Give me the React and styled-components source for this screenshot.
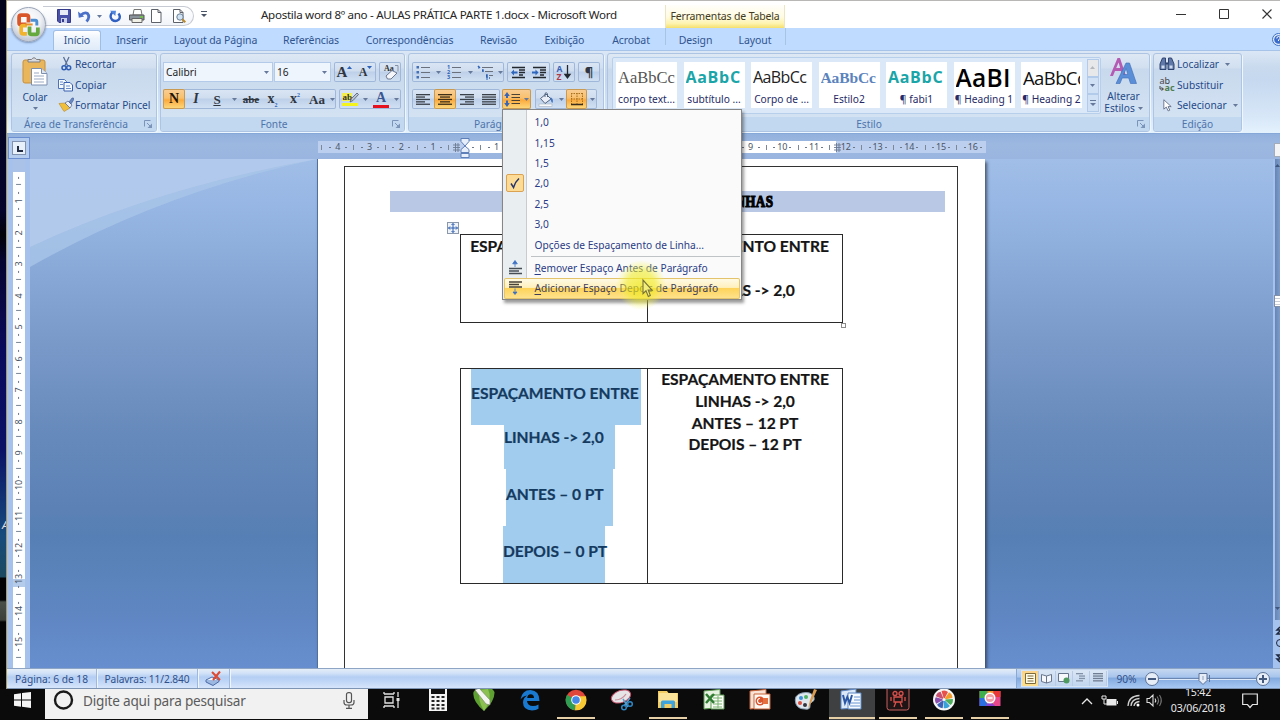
import React from 'react';
import styled, { createGlobalStyle, css } from 'styled-components';

const GlobalStyle = createGlobalStyle`
    * {
        box-sizing: border-box;
    }

    body {
        margin: 0;
        overflow: hidden;
        background: #000;
        font-family: 'Noto Sans', 'Open Sans', sans-serif;
        font-size: 10.2px;
        color: #264a88;
    }

    svg {
        display: block;
        flex: none;
        overflow: visible;
    }
`;

const Screen = styled.div`
    width: 1280px;
    height: 720px;
    display: flex;
    flex-direction: column;
    overflow: hidden;
    position: relative;
`;

const Desktop = styled.div`
    height: 689px;
    display: flex;
`;

const Wallpaper = styled.div`
    width: 7px;
    padding: 517px 0 0 2px;
    overflow: hidden;
    font-size: 11px;
    font-style: italic;
    color: #ddd;
    border-right: 1px solid #a89a60;
    background: linear-gradient(#03031a 0, #04042c 210px, #020208 235px, #050530 260px, #0a0a5c 350px,
        #0b1266 450px, #174b7c 535px, #1c4a60 577px, #020205 578px, #020205 600px, #4a5048 602px, #3c4038 620px,
        #050505 622px);
`;

const Window = styled.div`
    width: 1273px;
    display: flex;
    flex-direction: column;
    background: #bfdbff;
`;

/* ---------- title bar ---------- */

const TitleBar = styled.div`
    height: 28px;
    display: flex;
    background: #fff;
    border-top: 1px solid #b9b7b5;
`;

const QuickAccess = styled.div`
    width: 151px;
    height: 20px;
    flex: none;
    margin: 5px 0 0 36px;
    padding-left: 12px;
    display: flex;
    align-items: center;
    border: 1px solid #c6cad2;
    border-left: none;
    border-radius: 0 10px 10px 0;
    background: linear-gradient(#fff, #f1f4f9);
`;

const Slot = styled.span`
    width: ${(props) => props.$w}px;
    height: 100%;
    flex: none;
    display: flex;
    align-items: center;
    justify-content: center;
`;

const Title = styled.div`
    width: 404px;
    flex: none;
    margin-left: 47px;
    line-height: 27px;
    font-size: 11.6px;
    letter-spacing: -0.3px;
    color: #262626;
    white-space: nowrap;
`;

const ContextTitle = styled.div`
    width: 120px;
    height: 23px;
    flex: none;
    margin-top: 4px;
    line-height: 23px;
    text-align: center;
    font-size: 10.5px;
    letter-spacing: -0.15px;
    white-space: nowrap;
    color: #3f3a24;
    border-left: 1px solid #ece4c4;
    border-right: 1px solid #ece4c4;
    background: linear-gradient(#fffefa 0, #fffbe2 50%, #fdf3b0 80%, #f5e06c 100%);
`;

const WindowButtons = styled.div`
    margin-left: auto;
    height: 26px;
    display: flex;
    align-items: center;
`;

const OfficeButton = styled.div`
    position: absolute;
    left: 11px;
    top: 7px;
    width: 35px;
    height: 35px;
    display: flex;
    align-items: center;
    justify-content: center;
    border-radius: 50%;
    border: 1px solid #98a3b5;
    background: radial-gradient(circle at 50% 35%, #fff 0, #eef0f4 45%, #c3cad6 75%, #f2f6fb 100%);
    box-shadow: 0 1px 2px rgba(60, 80, 120, 0.5);
`;

/* ---------- tabs ---------- */

const TabStrip = styled.div`
    height: 22px;
    padding: 2px 0 0 46px;
    display: flex;
    background: #bfdbff;
`;

const Tab = styled.div`
    width: ${(props) => props.$w}px;
    height: 20px;
    line-height: 20px;
    text-align: center;
    font-size: 10.5px;
    letter-spacing: -0.1px;
    white-space: nowrap;
    color: #31558f;
    ${(props) => props.$active && css`
        border: 1px solid #9fbde6;
        border-bottom: none;
        border-radius: 3px 3px 0 0;
        line-height: 19px;
        background: linear-gradient(#fff, #edf4fc 40%, #e0ebf9);
    `}
`;

const ContextTabs = styled.div`
    display: flex;
    margin-top: -2px;
    padding-top: 2px;
    height: 17px;
    border-left: 1px solid #a9c3e3;
    border-right: 1px solid #a9c3e3;
`;

const Help = styled.div`
    margin: 0 0 0 auto;
    width: 8px;
    overflow: hidden;
    padding-top: 3px;
`;

/* ---------- ribbon ---------- */

const Ribbon = styled.div`
    height: 84px;
    padding: 2px 0 0 4px;
    display: flex;
    gap: 3px;
    border-top: 1px solid #a7c4e8;
    border-bottom: 1px solid #86a8d8;
    background: linear-gradient(#dbe7f5 0, #c9daee 20%, #c5d8ef 35%, #d8e7f8 80%, #e4f2fd 100%);
`;

const Group = styled.div`
    width: ${(props) => props.$w}px;
    height: 79px;
    flex: none;
    display: flex;
    flex-direction: column;
    border: 1px solid #adc4e2;
    border-radius: 3px;
    box-shadow: 1px 1px 0 #eef6ff;
    background: linear-gradient(#dee8f5 0, #d1dfef 14px, #c8d9ed 15px, #d7e5f5 100%);
    overflow: hidden;
`;

const GroupBody = styled.div`
    height: 63px;
    display: flex;
`;

const GroupLabel = styled.div`
    height: 14px;
    display: flex;
    align-items: center;
    justify-content: center;
    color: #4f74ab;
    background: #c1d8f0;

    svg {
        margin: 0 3px 0 auto;
    }

    span {
        flex: 1;
        text-align: center;
        white-space: nowrap;
        padding-right: ${(props) => props.$pr || 0}px;
    }
`;

const ToolRows = styled.div`
    padding: 8px 0 0 ${(props) => props.$pl}px;
    display: flex;
    flex-direction: column;
    gap: 7px;
`;

const ToolRow = styled.div`
    height: 20px;
    display: flex;
    gap: 3px;
`;

const Combo = styled.div`
    width: ${(props) => props.$w}px;
    margin-right: ${(props) => props.$mr || 0}px;
    height: 20px;
    padding: 0 3px 0 2px;
    display: flex;
    align-items: center;
    justify-content: space-between;
    color: #222;
    border: 1px solid #b3cae8;
    background: #eef5fd;
`;

const ButtonSet = styled.div`
    height: 20px;
    display: flex;
    border-radius: 2px;
    margin-left: ${(props) => props.$ml || 0}px;
    box-shadow: inset 0 0 0 1px #9fb7d8;
    background: linear-gradient(#dbe6f4 0, #cfddef 45%, #bdd0e9 50%, #d3e2f4 100%);
`;

const ToolButton = styled.div`
    width: ${(props) => props.$w}px;
    height: 20px;
    flex: none;
    display: flex;
    align-items: center;
    justify-content: center;
    gap: 3px;
    ${(props) => props.$on && css`
        border-radius: 2px;
        box-shadow: inset 0 0 0 1px #c99b52;
        background: linear-gradient(#f8cf98 0, #f9bf6c 45%, #fbaa3e 55%, #fddc80 100%);
    `}
    ${(props) => props.$top && css`
        gap: 0;

        svg {
            align-self: flex-start;
            margin-top: 4px;
        }
    `}
`;

const Glyph = styled.span`
    font-family: ${(props) => (props.$sans ? "'Noto Sans', sans-serif" : "'Liberation Serif', serif")};
    font-size: ${(props) => props.$size || 14}px;
    font-weight: 700;
    font-style: ${(props) => (props.$italic ? 'italic' : 'normal')};
    text-decoration: ${(props) => props.$deco || 'none'};
    line-height: 1;
    color: ${(props) => props.$color || '#2f3640'};

    sub,
    sup {
        font-size: 6px;
        line-height: 0;
        color: #2c62b8;
    }
`;

const Underbar = styled.div`
    display: flex;
    flex-direction: column;
    align-items: center;
    width: 16px;
    border-bottom: 3px solid ${(props) => props.$color};
`;

const PasteColumn = styled.div`
    width: 46px;
    padding-top: 3px;
    display: flex;
    flex-direction: column;
    align-items: center;
    line-height: 14px;

    div {
        margin: 4px 0 3px;
    }
`;

const CommandList = styled.div`
    padding-left: ${(props) => props.$pl}px;
    display: flex;
    flex-direction: column;
`;

const Command = styled.div`
    height: 20.5px;
    display: flex;
    align-items: center;
    gap: ${(props) => props.$gap || 1}px;
    white-space: nowrap;

    svg:last-child:not(:first-child) {
        margin-left: 4px;
    }
`;

const Gallery = styled.div`
    width: 489px;
    height: 57px;
    margin: 3px 0 0 4px;
    padding: 1px 1px 1px 3px;
    display: flex;
    border: 1px solid #b8cfec;
    border-radius: 2px;
    background: #dbe8f7;
`;

const StyleCard = styled.div`
    width: 61px;
    height: 46px;
    flex: none;
    margin: 3px 6.5px 0 0;
    background: #fff;
    overflow: hidden;
`;

const Sample = styled.div`
    height: 30px;
    line-height: 31px;
    width: 57px;
    margin-left: 2px;
    overflow: hidden;
    white-space: nowrap;
    font-family: ${(props) => props.$font};
    font-size: ${(props) => props.$size}px;
    font-weight: ${(props) => props.$weight || 400};
    letter-spacing: ${(props) => props.$ls || 0}px;
    color: ${(props) => props.$color};
`;

const StyleName = styled.div`
    line-height: 14px;
    text-align: center;
    white-space: nowrap;
    color: #262a66;
`;

const GalleryScroll = styled.div`
    width: 12px;
    margin-left: -2px;
    display: flex;
    flex-direction: column;
`;

const ScrollCell = styled.div`
    flex: 1;
    display: flex;
    align-items: center;
    justify-content: center;
    border: 1px solid #b2cbea;
    background: ${(props) => (props.$off ? '#e6e8ea' : '#d0e1f6')};
`;

const ChangeStyles = styled.div`
    width: 45px;
    padding-top: 4px;
    display: flex;
    flex-direction: column;
    align-items: center;
    line-height: 12px;
    white-space: nowrap;

    svg:first-child {
        margin-bottom: 5px;
    }

    span {
        display: flex;
        align-items: center;
        gap: 3px;
    }

    span svg:first-child {
        margin: 0;
    }
`;

/* ---------- rulers and document area ---------- */

const RulerBar = styled.div`
    height: 25px;
    display: flex;
    background: linear-gradient(#93b1dd, #9cb8e1 40%, #9ab6e0);
`;

const TabSelector = styled.div`
    width: 22px;
    height: 22px;
    margin: 3px 0 0 1px;
    padding: 3px;
    border: 1px solid #6b8fd0;
    background: #b4ccee;

    div {
        width: 14px;
        height: 14px;
        padding: 4px 0 0 4px;
        border: 1px solid #8293b1;
        background: #e8f0fa;
    }
`;

const HorizontalRuler = styled.div`
    width: 668px;
    height: 12px;
    margin: 7px 0 0 288px;
    display: flex;
    align-items: center;
    font-size: 9px;
    line-height: 12px;
    color: #4b5566;
    background: linear-gradient(90deg, #bccfee 0, #bccfee 147px, #fff 147px, #fff 518px, #bccfee 518px);

    span {
        width: 7.95px;
        flex: none;
        display: flex;
        justify-content: center;
    }
`;

const VerticalRuler = styled.div`
    width: 12px;
    margin-left: 6px;
    padding-top: 14.5px;
    display: flex;
    flex-direction: column;
    align-items: center;
    overflow: hidden;
    font-size: 9px;
    color: #4b5566;
    background: linear-gradient(#aac2e8 0, #aac2e8 13px, #fff 13px, #fff 420px, #b5cbea 420px, #b5cbea 428px, #fff 428px);

    span {
        width: 12px;
        height: 7.89px;
        flex: none;
        display: flex;
        align-items: center;
        justify-content: center;
        transform: rotate(-90deg);
    }
`;

const HalfTick = styled.i`
    width: 1px;
    height: 5px;
    background: #7c8797;
`;

const QuarterTick = styled.i`
    width: 2px;
    height: 1px;
    background: #6d7889;
`;

const Workspace = styled.div`
    height: 509px;
    display: flex;
    background: #a6c1ec;
`;

const Canvas = styled.div`
    width: 1243px;
    margin-left: 5px;
    display: flex;
    overflow: hidden;
    background: linear-gradient(#a0bee7 0, #98b7e4 42px, #88a9d7 114px, #7999c9 185px, #668abb 274px, #5c81b5 349px,
        #5680b5 378px, #5f86c1 453px, #678fcf 509px);
`;

const Page = styled.div`
    width: 668px;
    height: 509px;
    flex: none;
    background: #fff;
    border-left: 1px solid #53709c;
    box-shadow: 2px 3px 3px rgba(45, 55, 75, 0.75);
    padding: 7px 0 0 26px;
`;

const PageFrame = styled.div`
    width: 614px;
    height: 520px;
    border: 1px solid #333;
`;

const Heading = styled.div`
    width: 555px;
    height: 21px;
    margin: 24px 0 0 45px;
    display: flex;
    justify-content: center;
    background: #b9c9e5;

    span {
        font-family: 'Liberation Serif', serif;
        font-weight: 700;
        font-size: 17px;
        line-height: 22px;
        letter-spacing: 0.5px;
        white-space: nowrap;
        color: #000;
        -webkit-text-stroke: 1.2px #000;
        transform: scaleX(0.77);
    }
`;

const Table = styled.div`
    width: 383px;
    height: ${(props) => props.$h}px;
    margin: ${(props) => props.$mt}px 0 0 115px;
    display: flex;
    position: relative;
    border: 1px solid #2a2a2a;
    font-family: Lato, 'Open Sans', sans-serif;
    font-weight: 700;
    font-size: 15.6px;
    letter-spacing: -0.05px;
    color: #151515;
    -webkit-text-stroke: 0.2px;
    white-space: nowrap;
`;

const Cell = styled.div`
    width: ${(props) => props.$w}px;
    flex: none;
    display: flex;
    flex-direction: column;
    align-items: ${(props) => (props.$left ? 'flex-start' : 'center')};
    line-height: ${(props) => props.$lh || 21.8}px;
    padding-top: ${(props) => props.$pt || 0}px;

    & + & {
        border-left: 1px solid #2a2a2a;
    }
`;

const Selected = styled.div`
    width: ${(props) => props.$w}px;
    height: ${(props) => props.$h}px;
    margin-left: ${(props) => props.$ml}px;
    padding-top: ${(props) => props.$pt}px;
    line-height: 22px;
    background: #a2cced;
    color: #143a60;
`;

const FirstLine = styled.span`
    margin-top: -11px;
`;

const MoveHandle = styled.div`
    position: absolute;
    left: -14px;
    top: -13px;
    width: 12px;
    height: 12px;
    display: flex;
    align-items: center;
    justify-content: center;
    border: 1px solid #8b97ab;
    background: #eef3fa;
`;

const ResizeHandle = styled.div`
    position: absolute;
    right: -4px;
    bottom: -6px;
    width: 5px;
    height: 5px;
    border: 1px solid #8b8b8b;
    background: #fff;
`;

const ScrollColumn = styled.div`
    width: 7px;
    margin-left: auto;
    display: flex;
    flex-direction: column;
    align-items: flex-end;
    background: #a5c1ee;
    overflow: hidden;
`;

const ScrollTrack = styled.div`
    width: 5px;
    height: 461px;
    display: flex;
    flex-direction: column;
    background: linear-gradient(90deg, #6685b3, #7d9ccb);
    padding-top: 5px;
    align-items: flex-end;
`;

const ScrollThumb = styled.div`
    width: 6px;
    height: 12px;
    margin: 128px 0 300px;
    border: 1px solid #8190a8;
    border-right: none;
    background: repeating-linear-gradient(#fff 0, #fff 2px, #c9ced6 2px, #c9ced6 3px);
`;

const RulerToggle = styled.div`
    width: 6px;
    height: 14px;
    margin: 9px 0 0 auto;
    padding: 2px 0 0 1px;
    border: 1px solid #a2acbb;
    border-right: none;
    background: #f2f4f6;
    overflow: hidden;
`;

/* ---------- status bar ---------- */

const StatusBar = styled.div`
    height: 21px;
    display: flex;
    border-top: 1px solid #8ea5c6;
    border-bottom: 1px solid #7d94b5;
    color: #31508a;
    background: linear-gradient(#e4edf8 0, #cfe0f7 25%, #b4cef3 42%, #bcd4f6 60%, #d6e5fa 100%);
`;

const StatusItem = styled.div`
    width: ${(props) => props.$w}px;
    height: 100%;
    display: flex;
    align-items: center;
    justify-content: center;
    border-right: 1px solid #9fb9de;
    box-shadow: 1px 0 0 #eef5ff;
    white-space: nowrap;
    letter-spacing: ${(props) => props.$ls || 0}px;
`;

const StatusTools = styled.div`
    width: 264px;
    margin-left: auto;
    padding-left: 4px;
    display: flex;
    align-items: center;
    border-left: 1px solid #8aa8d4;
    background: linear-gradient(#c6d8f1 0, #a9c5ec 40%, #84abe0 50%, #a7c8f3 100%);
`;

const ViewSet = styled.div`
    width: 87px;
    height: 17px;
    display: flex;
    border: 1px solid #d6e4f6;
    background: linear-gradient(#d9e5f4, #c1d5ef);
`;

const ViewButton = styled.div`
    width: 17px;
    height: 15px;
    display: flex;
    align-items: center;
    justify-content: center;
    border-right: 1px solid #b7cbe6;
    background: ${(props) => (props.$on ? 'linear-gradient(#fbd38a, #fce08e)' : 'none')};
`;

const RoundButton = styled.div`
    width: 14px;
    height: 14px;
    flex: none;
    display: flex;
    align-items: center;
    justify-content: center;
    border: 1px solid #5d7297;
    border-radius: 50%;
    background: #e6edf6;
`;

const SliderLine = styled.div`
    width: 97px;
    height: 14px;
    flex: none;
    display: flex;
    align-items: center;
    padding-left: 39px;
    background: linear-gradient(transparent 6px, #6c86b2 6px, #6c86b2 7px, #dbe8fa 7px, #dbe8fa 8px, transparent 8px);
`;

/* ---------- line spacing menu ---------- */

const Menu = styled.div`
    position: absolute;
    left: 502px;
    top: 109px;
    width: 240px;
    height: 191px;
    padding: 2px 1px;
    border: 1px solid #868686;
    background: linear-gradient(90deg, #e9eef0 0, #e9eef0 23px, #c9cccf 23px, #c9cccf 24px, #fafafa 24px);
    box-shadow: 2px 3px 3px rgba(30, 30, 30, 0.45);
    display: flex;
    flex-direction: column;
`;

const MenuItem = styled.div`
    height: 20.4px;
    flex: none;
    display: flex;
    align-items: center;
    color: #2b3c86;
    white-space: nowrap;
    border-radius: 2px;
    ${(props) => props.$hover && css`
        color: #3f3c58;
        letter-spacing: 0.05px;
        box-shadow: inset 0 0 0 1px #e3c46c;
        background: linear-gradient(#fffbe9 0, #fef0bd 45%, #fdd35a 50%, #fee391 100%);
    `}

    u {
        text-underline-offset: 2px;
    }
`;

const MenuIcon = styled.div`
    width: 30.5px;
    padding-left: 4px;
    display: flex;
    align-items: center;
`;

const CheckBox = styled.div`
    width: 18px;
    height: 18px;
    margin-left: -2px;
    flex: none;
    display: flex;
    align-items: center;
    justify-content: center;
    border: 1px solid #dba251;
    border-radius: 2px;
    background: #fcdb96;
`;

const MenuLine = styled.div`
    height: 1px;
    flex: none;
    margin: 1px 0 1px 27px;
    background: #bfc3c6;
`;

const Spotlight = styled.div`
    position: absolute;
    left: 616px;
    top: 260px;
    width: 50px;
    height: 50px;
    border-radius: 50%;
    background: radial-gradient(circle closest-side, rgba(238, 232, 20, 0.68) 0, rgba(240, 236, 40, 0.6) 55%,
        rgba(245, 243, 80, 0.3) 80%, rgba(250, 250, 120, 0) 100%);
`;

const Pointer = styled.div`
    position: absolute;
    left: 642px;
    top: 279px;
`;

/* ---------- taskbar ---------- */

const Taskbar = styled.div`
    height: 31px;
    display: flex;
    background: #0b0b0c;
    overflow: hidden;
`;

const StartButton = styled.div`
    width: 45px;
    flex: none;
    padding: 3px 0 0 14px;
`;

const SearchBox = styled.div`
    width: 323px;
    height: 30px;
    flex: none;
    padding: 0 0 7px 8px;
    display: flex;
    align-items: center;
    background: #f1f1f1;
    font-size: 13.6px;
    letter-spacing: -0.2px;
    color: #5b5b5b;

    span {
        margin-left: 9px;
        width: 260px;
    }
`;

const TaskItem = styled.div`
    width: ${(props) => props.$w || 46}px;
    height: 31px;
    flex: none;
    display: flex;
    flex-direction: column;
    align-items: center;
    justify-content: space-between;
    padding-bottom: 1px;
    background: ${(props) => (props.$active ? '#3f4042' : 'transparent')};

    &::after {
        content: '';
        width: ${(props) => (props.$active ? 46 : 38)}px;
        height: 2px;
        background: ${(props) => (props.$open ? '#e6cfa6' : 'transparent')};
    }
`;

const Tray = styled.div`
    margin-left: auto;
    width: 203px;
    height: 23px;
    flex: none;
    display: flex;
    align-items: center;
    color: #e8e8e8;
`;

const Clock = styled.div`
    width: 64px;
    flex: none;
    align-self: flex-start;
    margin-top: -5px;
    display: flex;
    flex-direction: column;
    align-items: center;
    font-size: 10.6px;
    line-height: 16px;
    letter-spacing: -0.2px;
`;

/* ---------- small drawings ---------- */

function Arrow({ color = '#66799b', up }) {
    return (
        <svg width="5" height="3" viewBox="0 0 5 3">
            <path d={up ? 'M0 3h5L2.500 0z' : 'M0 0h5L2.500 3z'} fill={color} />
        </svg>
    );
}

function Launcher() {
    return (
        <svg width="9" height="9" viewBox="0 0 9 9">
            <path d="M.5 6.500V.500H6.500" fill="none" stroke="#7b93b8" />
            <path d="M3 3l3 3" stroke="#7b93b8" />
            <path d="M8 3.500V8H3.500z" fill="#7b93b8" />
        </svg>
    );
}

// rows: list of [x, width] drawn top to bottom
function Lines({ rows, color = '#3a4048', w = 14, step = 2.4 }) {
    return (
        <svg width={w} height="13" viewBox={`0 0 ${w} 13`}>
            {rows.map(([x, len], i) => (
                <rect key={i} x={x} y={1 + i * step} width={len} height="1.3" fill={color} />
            ))}
        </svg>
    );
}

function ListIcon({ marks }) {
    return (
        <svg width="14" height="14" viewBox="0 0 14 14">
            {[2, 7, 12].map((y, i) => (
                <g key={y}>
                    {marks ? (
                        <text x="0" y={y + 2} fontSize="5.500" fontWeight="700" fill="#2e62b5">{marks[i]}</text>
                    ) : (
                        <rect x="0.500" y={y - 1} width="2.500" height="2.500" fill="#4470b8" />
                    )}
                    <path d={`M5 ${y}.500h9`} stroke="#6a717c" />
                </g>
            ))}
        </svg>
    );
}

function IndentIcon({ flip }) {
    return (
        <svg width="15" height="13" viewBox="0 0 15 13">
            <path d="M1 1.500h13M8 4h6M8 6.500h6M8 9h4M1 11.500h13" stroke="#23272e" strokeWidth="1.400" />
            <path d={flip ? 'M6.500 6.500L3.500 3.500v2H0v2h3.500v2z' : 'M0 6.500L3 3.500v2h3.500v2H3v2z'} fill="#2e66bd" />
        </svg>
    );
}

function OfficeLogo() {
    return (
        <svg width="24" height="24" viewBox="0 0 23 23" fill="none" strokeWidth="3.600">
            <path d="M9 11H3.500Q2 11 2 9.500V4Q2 2 4 2H9Q11 2 11 4v5" stroke="#d9562a" />
            <path d="M13 7h4.500Q19 7 19 8.500V12" stroke="#4d8fd1" strokeWidth="2.800" />
            <path d="M9.500 12H6Q4 12 4 14v4q0 2 2 2h3.500" stroke="#f1b32e" />
            <path d="M12 13v5.500q0 2 2 2h4q2 0 2-2V14" stroke="#65a83c" />
            <path d="M8 11h7" stroke="#e9902c" strokeWidth="2" />
        </svg>
    );
}

function Save() {
    return (
        <svg width="14" height="14" viewBox="0 0 14 14">
            <path d="M.5.5h13v13H2L.5 12z" fill="#4a51a8" stroke="#34398a" />
            <path d="M3 1h8v5H3z" fill="#e6ebf7" />
            <path d="M4 9h6v5H4z" fill="#c9cfe6" />
            <path d="M5 10h2v3H5z" fill="#34398a" />
        </svg>
    );
}

function Undo() {
    return (
        <svg width="13" height="13" viewBox="0 0 13 13">
            <path d="M2.500 5.500Q6.500 1.500 9.500 3.500 12.500 7 8.500 11.500" fill="none" stroke="#4a70c8" strokeWidth="2.800" />
            <path d="M0 1.500l.8 6.200 5.400-1.200z" fill="#4a70c8" />
        </svg>
    );
}

function Redo() {
    return (
        <svg width="13" height="13" viewBox="0 0 13 13">
            <path d="M3.200 2.500Q0 6.500 3 9.700 6.500 12.500 9.700 9.700 12 7 9.500 3.500" fill="none" stroke="#2f5fc0" strokeWidth="2.400" />
            <path d="M1 .8h6L6.300 6z" fill="#4f84dc" />
        </svg>
    );
}

function Printer() {
    return (
        <svg width="16" height="14" viewBox="0 0 16 14">
            <path d="M4 6l1-5.500h7L13 6z" fill="#fff" stroke="#777" />
            <path d="M.5 6h14.500v5H.5z" fill="#8a929c" stroke="#555" />
            <path d="M3 9.500h10v4H3z" fill="#f1f1e8" stroke="#666" />
            <rect x="11" y="7" width="3" height="2" fill="#6fbf4a" />
        </svg>
    );
}

function PageIcon({ lens }) {
    return (
        <svg width="13" height="14" viewBox="0 0 13 14">
            <path d="M1.500.5h6.500l3 3v10h-9.500z" fill="#fff" stroke="#5c6068" />
            <path d="M8 .5v3h3" fill="none" stroke="#5c6068" />
            {lens && (
                <g>
                    <circle cx="8" cy="8" r="3.200" fill="#cfe3f5" stroke="#6b7f96" />
                    <path d="M10.300 10.300l3 3" stroke="#b98a2c" strokeWidth="2" />
                </g>
            )}
        </svg>
    );
}

function Paste() {
    return (
        <svg width="26" height="29" viewBox="0 0 26 29">
            <rect x="1" y="3" width="22" height="23" rx="2" fill="#eab65c" stroke="#c88f38" />
            <path d="M6 5V2.500h3.500Q12 -1 14.500 2.500H18V5z" fill="#d8dadf" stroke="#7d7d80" />
            <path d="M9.500 11.500h10l5.500 5V28H9.500z" fill="#fff" stroke="#7c8fae" />
            <path d="M19.500 11.500v5H25" fill="#dce5f2" stroke="#7c8fae" />
            <path d="M12 16h5M12 19h10M12 22h10M12 25h10" stroke="#9aaac4" />
        </svg>
    );
}

function Scissors() {
    return (
        <svg width="16" height="14" viewBox="0 0 16 14" fill="none">
            <path d="M5.500 0L9.500 8.500M11 0L7 8.500" stroke="#5b7099" strokeWidth="1.300" />
            <circle cx="6" cy="10.700" r="2" stroke="#2f5db4" strokeWidth="1.500" />
            <circle cx="10.700" cy="10.700" r="2" stroke="#2f5db4" strokeWidth="1.500" />
        </svg>
    );
}

function Copy() {
    return (
        <svg width="16" height="14" viewBox="0 0 16 14">
            <path d="M.500 1.500h6l2 2V10.500H.500z" fill="#f4f8ff" stroke="#4d72b5" />
            <path d="M6 4.500h6l2.500 2.500v6H6z" fill="#f4f8ff" stroke="#3a5fae" />
            <path d="M2 4h3M2 6.500h3M8 8h4M8 10.500h5" stroke="#6d8cc6" />
        </svg>
    );
}

function Brush() {
    return (
        <svg width="16" height="14" viewBox="0 0 16 14">
            <path d="M1 5.500L7 5l5 5-6 3.500z" fill="#f0c03c" stroke="#b8872a" strokeWidth=".6" />
            <path d="M7 5l3-2 4 4-2 3z" fill="#e9eef6" stroke="#5a6d93" strokeWidth=".8" />
            <path d="M11 4l3-4h1.500v2L13 6z" fill="#6b8ac4" stroke="#3c5a96" strokeWidth=".6" />
        </svg>
    );
}

function Eraser() {
    return (
        <svg width="18" height="16" viewBox="0 0 18 16">
            <text x="3" y="7" fontSize="8" fontWeight="700" fontFamily="Liberation Serif, serif" fill="#333">Aa</text>
            <path d="M5 12l6-5.500 5 2.500-6 6H6.500z" fill="#f5f7fb" stroke="#6d7890" />
            <path d="M14 1.500h3v6" fill="none" stroke="#8792a8" />
        </svg>
    );
}

function Highlighter() {
    return (
        <svg width="17" height="11" viewBox="0 0 17 11">
            <rect x="0" y="1" width="10" height="8" fill="#f2ef4e" />
            <text x="0.500" y="8" fontSize="9" fontWeight="700" fontFamily="Liberation Serif, serif" fill="#333">ab</text>
            <path d="M8 10l1.500-3.500L15 1l1.500 1.500L11 8.500z" fill="#b9c3d4" stroke="#4f5b70" strokeWidth=".8" />
        </svg>
    );
}

function SortIcon() {
    return (
        <svg width="16" height="16" viewBox="0 0 16 16">
            <text x="0.500" y="7.500" fontSize="8.500" fontWeight="700" fill="#3a62b5">A</text>
            <text x="0.500" y="15.500" fontSize="8.500" fontWeight="700" fill="#b03a48">Z</text>
            <path d="M11.500 1v12M9 10.500l2.500 3.500 2.500-3.500z" stroke="#23272e" strokeWidth="1.300" fill="#23272e" />
        </svg>
    );
}

function MultiLevel() {
    return (
        <svg width="17" height="15" viewBox="0 0 17 15">
            <path d="M1 1l2 2M5 5h1v2M9 10h1v3M12 13h1" stroke="#2e62b5" strokeWidth="1.500" />
            <path d="M5 2.500h11M8 6.500h8M12 10.500h4" stroke="#6a717c" />
            <path d="M1 3h1M9 14h2" stroke="#2e62b5" />
        </svg>
    );
}

function LineSpacing() {
    return (
        <svg width="17" height="15" viewBox="0 0 17 15">
            <path d="M3 0l2.800 4H4v2H2V4H.2zM3 15l-2.800-4H2V8.500h2V11h1.800z" fill="#3766b8" />
            <path d="M7.500 2.500H16M7.500 5.500H16M7.500 8.500H16M7.500 11.500H16" stroke="#4b4436" strokeWidth="1.200" />
        </svg>
    );
}

function Bucket() {
    return (
        <svg width="17" height="15" viewBox="0 0 17 15">
            <rect x="1" y="12" width="13" height="2.500" fill="#f6f8fa" stroke="#a3aec0" strokeWidth=".6" />
            <path d="M2.500 6.500L8 2l5 5-6 4.500z" fill="#e9eef6" stroke="#53647f" />
            <path d="M7 5V1.500Q8.500-.5 9.500 2v3" fill="none" stroke="#53647f" />
            <path d="M12.500 5q3.500 2 2 6-2-1-2-6z" fill="#4377c6" />
        </svg>
    );
}

function BorderIcon() {
    return (
        <svg width="14" height="14" viewBox="0 0 14 14" fill="none">
            <path d="M1 1.500h12M1 7h12M1.500 1v11M7 1v11M12.500 1v11" stroke="#a6711f" strokeDasharray="1.500 1" />
            <path d="M1 12.500h12" stroke="#3b2f20" strokeWidth="1.500" />
        </svg>
    );
}

function ChangeIcon() {
    return (
        <svg width="30" height="27" viewBox="0 0 30 27">
            <path d="M1 18L8.500 0h2.500l6 18h-3.500l-1.500-5H6l-2 5zM7.200 10h4L9.600 4.500z" fill="#b45bb4" />
            <path d="M7 25.500L17 5h3.500l7 20.500h-6l-1.800-5.500h-6.500l-2.200 5.500zM14.500 16.500h4.300L17.200 10.500z" fill="#5a8fd8" stroke="#3c6bb5" strokeWidth=".6" />
        </svg>
    );
}

function Binoculars() {
    return (
        <svg width="16" height="14" viewBox="0 0 16 14">
            <path d="M3.500 1h3v4l.5 2v5.500H1V7zM9.500 1h3L15 7v5.500H9V7l.5-2z" fill="#6078a8" stroke="#2e4370" />
            <path d="M6.500 5.500h3v2h-3z" fill="#2e4370" />
            <path d="M2.500 8.500h3v3h-3zM10.500 8.500h3v3h-3z" fill="#cdd9ee" />
        </svg>
    );
}

function ReplaceIcon() {
    return (
        <svg width="16" height="15" viewBox="0 0 16 15">
            <text x="0.500" y="7" fontSize="9" fill="#444">ab</text>
            <text x="5.500" y="14" fontSize="9" fontWeight="700" fill="#4f7d52">ac</text>
            <path d="M1 9v3h3M2.500 10.500L4.500 12l-2 1.500" fill="none" stroke="#444" />
        </svg>
    );
}

function Cursor({ w = 9, h = 13, fill = '#fff', stroke = '#5a6680' }) {
    return (
        <svg width={w} height={h} viewBox="0 0 11 18" preserveAspectRatio="none">
            <path d="M1 1v13l3-2.800L6.300 16.500l2-1L6.200 10.500H10z" fill={fill} stroke={stroke} strokeWidth="1.100" />
        </svg>
    );
}

function SpaceIcon({ after }) {
    return (
        <svg width="15" height="15" viewBox="0 0 15 15">
            {after ? (
                <>
                    <path d="M1 1h13M1 3.500h10M1 6h13" stroke="#474338" strokeWidth="1.300" />
                    <path d="M7 7.500v3M7 13.500l-2-2.500h4z" stroke="#3a6fc4" fill="#3a6fc4" strokeWidth=".8" />
                </>
            ) : (
                <>
                    <path d="M1 8.500h13M1 11h10M1 13.500h13" stroke="#474d55" strokeWidth="1.300" />
                    <path d="M7 7V4M7 .5l-2.300 3.300h4.600z" stroke="#3a6fc4" fill="#3a6fc4" strokeWidth=".8" />
                </>
            )}
        </svg>
    );
}

function MarginGrip() {
    return (
        <svg width="8" height="9" viewBox="0 0 8 9">
            <path d="M0 2h7M0 4.500h7M0 7h7M2.500 0v9M5 0v9" stroke="#6c7a92" strokeWidth=".9" fill="none" />
        </svg>
    );
}

/* taskbar drawings, each in a 24 x 23 box */
const TaskSvg = styled.svg.attrs({ width: 24, height: 23, viewBox: '0 0 24 23' })``;

const PETALS = ['#e8504a', '#f39a2d', '#4fae5c', '#3aa0d8', '#3c62b8', '#8a4fae', '#c9506e'];

const taskIcons = {
    view: (
        <TaskSvg fill="none" stroke="#e2e2e2" strokeWidth="1.300">
            <path d="M4 5h10M4 17h10M5 8h8v6H5zM4 3v2M14 3v2M4 17v2M14 17v2M18 3v5M18 12v7" />
            <path d="M16.500 9h3v3h-3z" fill="#e2e2e2" stroke="none" />
        </TaskSvg>
    ),
    calc: (
        <TaskSvg>
            <path d="M3 -2h18v24H3z" fill="#f5f5f5" />
            <path d="M5 0h14v5H5z" fill="#111" />
            {[8, 12, 16, 19.5].map((y) => (
                <path key={y} d={`M5.500 ${y}h3M10.500 ${y}h3M15.500 ${y}h3`} stroke="#222" strokeWidth="2" />
            ))}
        </TaskSvg>
    ),
    corel: (
        <TaskSvg>
            <path d="M12 22Q0 12 1.500 3 6-3 12-2q7-1 10.500 5Q23 12 12 22z" fill="#5fa032" />
            <path d="M12 22Q5 10 8 1l8-1q5 10-4 22z" fill="#8cc152" />
            <path d="M3 1l4-2 11 12 0 5-4-1z" fill="#f3f5ee" stroke="#7d8a6a" strokeWidth=".7" />
        </TaskSvg>
    ),
    edge: (
        <TaskSvg>
            <path d="M2.500 10.500Q4 1 12.500 1 21.500 1.500 21.500 12H9q.5 5 6 5 3 0 5.500-1.500v4.300Q18 21.500 14 21.500 5 21 5 13.500 5 9 9 6.500 5 7 2.500 10.500zM9.200 9H16q0-3.800-3.300-3.800T9.200 9z" fill="#1979d1" />
        </TaskSvg>
    ),
    chrome: (
        <TaskSvg>
            <circle cx="12" cy="11" r="10.300" fill="#e0473a" />
            <path d="M12 11L3 5.800Q-1 14 6 19.500q3 2 5 1.800z" fill="#2f9e52" />
            <path d="M12 11l-1 10.300q8 .5 11-6.500 1-4 0-7.500H12z" fill="#f8c933" />
            <circle cx="12" cy="11" r="4.800" fill="#fff" />
            <circle cx="12" cy="11" r="3.800" fill="#4688e8" />
        </TaskSvg>
    ),
    snip: (
        <TaskSvg>
            <ellipse cx="11" cy="7.500" rx="10" ry="6" transform="rotate(-20 11 7.500)" fill="#e6e4e6" stroke="#c3506a" />
            <path d="M5 11q7 0 11-6" stroke="#c98a98" fill="none" strokeWidth="1.200" />
            <path d="M13 10l5 8M20 9l-6 8" stroke="#5a9ccc" strokeWidth="1.500" />
            <circle cx="14" cy="18.500" r="2.300" fill="none" stroke="#2f86c4" strokeWidth="1.500" />
            <circle cx="20" cy="15" r="2.300" fill="none" stroke="#2f86c4" strokeWidth="1.500" />
        </TaskSvg>
    ),
    folder: (
        <TaskSvg>
            <path d="M2 2h9l1.500 2H22v15H2z" fill="#f4cd62" />
            <path d="M3 4h18v9H3z" fill="#fbe39a" />
            <path d="M5 19v-6q0-1.500 1.500-1.500h11Q19 11.500 19 13v6h-3.500v-4h-7v4z" fill="#3fa3dc" />
        </TaskSvg>
    ),
    excel: (
        <TaskSvg>
            <path d="M2 2l16-1.500v18L2 20z" fill="#e7f2e2" stroke="#5c9a52" />
            <path d="M9 6h13v14H9z" fill="#fafdf8" stroke="#5c9a52" />
            <path d="M11 9h9M11 12h9M11 15h9M11 18h9M16 7v12" stroke="#7bb36e" />
            <path d="M4 5l8 9M12 5l-8 9" stroke="#2f7d32" strokeWidth="2.500" />
        </TaskSvg>
    ),
    power: (
        <TaskSvg>
            <path d="M2 2l16-1.500v18L2 20z" fill="#f8e3d6" stroke="#c9643a" />
            <path d="M6 5h16v15H6z" fill="#fff7f2" stroke="#c9643a" />
            <circle cx="12" cy="12" r="4.500" fill="#d9532c" />
            <path d="M15 9h5v6h-5z" fill="#e5703f" />
            <path d="M12 9.500a2.500 2.500 0 1 0 2 4" fill="none" stroke="#fff" strokeWidth="1.200" />
        </TaskSvg>
    ),
    paint: (
        <TaskSvg>
            <path d="M2 15Q-1 6 8 4q9-2 12 4 1 4-2 5-3 1-2 4 0 4-5 3-7 0-9-5z" fill="#dfe7ee" stroke="#8fa3b5" />
            <circle cx="7" cy="9" r="2" fill="#3d8fd8" />
            <circle cx="12" cy="8" r="2" fill="#4fb060" />
            <circle cx="6" cy="14" r="2" fill="#d84f3d" />
            <circle cx="11" cy="16" r="2" fill="#35343b" />
            <path d="M20 0l-4 11-2 9 4-8 5-11z" fill="#d89b52" />
        </TaskSvg>
    ),
    word: (
        <TaskSvg>
            <path d="M1 2l15-2v19L1 20z" fill="#dbe8f8" stroke="#5b86c4" />
            <path d="M8 4h13v16H8z" fill="#f7fbff" stroke="#5b86c4" />
            <path d="M14 8h6M14 11h6M11 14h9M10 17h10" stroke="#6a94d2" />
            <path d="M3 6l2 8 2.300-6 2.300 6L12 6" fill="none" stroke="#2a57a5" strokeWidth="2" />
        </TaskSvg>
    ),
    robot: (
        <TaskSvg>
            <rect x="1" y="-3" width="22" height="24" rx="2.500" fill="#1e1416" stroke="#c8605f" strokeWidth="1" />
            <g fill="none" stroke="#d9514c" strokeWidth="1.300">
                <circle cx="9" cy="4.500" r="2" />
                <circle cx="15" cy="4.500" r="2" />
                <path d="M8 8h8v5H8zM10 13l-2 5M14 13l2 5M5 8v4M19 8v4" />
            </g>
        </TaskSvg>
    ),
    pinwheel: (
        <TaskSvg>
            <circle cx="12" cy="10.500" r="11" fill="#f6f6f6" />
            {PETALS.map((c, i) => (
                <path key={c} d="M12 10.500L9.500 2Q13.500.5 16 3z" fill={c} transform={`rotate(${i * 51.4} 12 10.500)`} />
            ))}
            <circle cx="12" cy="10.500" r="1.500" fill="#f6f6f6" />
        </TaskSvg>
    ),
    camera: (
        <TaskSvg>
            <rect x="1.500" y="2" width="21" height="15" fill="#e8488c" />
            <path d="M1.500 2h8v7h-8z" fill="#3fae4d" />
            <path d="M1.500 9h8v8h-8z" fill="#2b6fe0" />
            <path d="M9.500 2h6v15h-6z" fill="#f39a2d" />
            <path d="M15.500 2h7v6h-7z" fill="#e8383a" />
            <path d="M8 17l4-6 5 6z" fill="#8d3fd0" />
            <circle cx="12" cy="9" r="4.800" fill="#f2a0a8" stroke="#fff" strokeWidth="1.500" />
            <path d="M9.500 9h5" stroke="#fff" strokeWidth="1.500" />
        </TaskSvg>
    ),
};

const TASKS = [
    { icon: 'view', w: 47 },
    { icon: 'calc' },
    { icon: 'corel' },
    { icon: 'edge' },
    { icon: 'chrome', open: true },
    { icon: 'snip' },
    { icon: 'folder', open: true },
    { icon: 'excel' },
    { icon: 'power' },
    { icon: 'paint' },
    { icon: 'word', open: true, active: true },
    { icon: 'robot', open: true },
    { icon: 'pinwheel', open: true },
    { icon: 'camera', open: true },
];

const SERIF = "'Liberation Serif', serif";
const SANS = "'Open Sans', sans-serif";

const STYLES = [
    { text: 'AaBbCc', name: 'corpo text...', font: SERIF, size: 16.5, color: '#555' },
    { text: 'AaBbC', name: 'subtítulo ...', font: SANS, size: 16, weight: 700, color: '#1aa5a8', ls: 0.7 },
    { text: 'AaBbCc', name: 'Corpo de ...', font: SANS, size: 16, color: '#222', ls: -0.6 },
    { text: 'AaBbCc', name: 'Estilo2', font: SERIF, size: 15.5, weight: 700, color: '#5b83bd', ls: -0.1 },
    { text: 'AaBbC', name: '¶ fabi1', font: SANS, size: 16, weight: 700, color: '#1aa5a8', ls: 0.7 },
    { text: 'AaBI', name: '¶ Heading 1', font: SANS, size: 24.5, weight: 600, color: '#000', ls: 0.3 },
    { text: 'AaBbCc', name: '¶ Heading 2', font: SANS, size: 18.5, color: '#111', ls: -0.6 },
];

// quarter-centimetre marks along a ruler, grips stand at the column edges
function ticks(from, to, grips = []) {
    const cells = [];
    for (let k = from; k <= to; k++) {
        if (grips.includes(k)) cells.push(<span key={k}><MarginGrip /></span>);
        else if (k === 0) cells.push(<span key={k} />);
        else if (k % 4 === 0) cells.push(<span key={k}>{Math.abs(k) / 4}</span>);
        else if (k % 2 === 0) cells.push(<span key={k}><HalfTick /></span>);
        else cells.push(<span key={k}><QuarterTick /></span>);
    }
    return cells;
}

const IndentMarker = styled.div`
    position: absolute;
    left: 459px;
    top: 138px;
`;

function RibbonBar() {
    return (
        <Ribbon>
            <Group $w={146}>
                <GroupBody>
                    <PasteColumn>
                        <Paste />
                        <div>Colar</div>
                        <Arrow />
                    </PasteColumn>
                    <CommandList $pl={0}>
                        <Command><Scissors />Recortar</Command>
                        <Command><Copy />Copiar</Command>
                        <Command><Brush />Formatar Pincel</Command>
                    </CommandList>
                </GroupBody>
                <GroupLabel $pr={4}><span>Área de Transferência</span><Launcher /></GroupLabel>
            </Group>

            <Group $w={245}>
                <GroupBody>
                    <ToolRows $pl={2}>
                        <ToolRow>
                            <Combo $w={110} $mr={-2}>Calibri<Arrow /></Combo>
                            <Combo $w={57}>16<Arrow /></Combo>
                            <ButtonSet>
                                <ToolButton $w={21} $top><Glyph $size={15}>A</Glyph><Arrow up color="#2c62b8" /></ToolButton>
                                <ToolButton $w={21} $top><Glyph $size={12}>A</Glyph><Arrow color="#2c62b8" /></ToolButton>
                            </ButtonSet>
                            <ButtonSet><ToolButton $w={22}><Eraser /></ToolButton></ButtonSet>
                        </ToolRow>
                        <ToolRow>
                            <ButtonSet>
                                <ToolButton $w={22} $on><Glyph $color="#1d1507">N</Glyph></ToolButton>
                                <ToolButton $w={22}><Glyph $italic>I</Glyph></ToolButton>
                                <ToolButton $w={20}><Glyph $size={13} $deco="underline">S</Glyph></ToolButton>
                                <ToolButton $w={14}><Arrow /></ToolButton>
                                <ToolButton $w={20}><Glyph $size={11} $deco="line-through">abe</Glyph></ToolButton>
                                <ToolButton $w={23}><Glyph>x<sub>2</sub></Glyph></ToolButton>
                                <ToolButton $w={22}><Glyph>x<sup>2</sup></Glyph></ToolButton>
                                <ToolButton $w={22}><Glyph $size={13}>Aa</Glyph></ToolButton>
                                <ToolButton $w={8}><Arrow /></ToolButton>
                            </ButtonSet>
                            <ButtonSet>
                                <ToolButton $w={22}><Underbar $color="#f4f41c"><Highlighter /></Underbar></ToolButton>
                                <ToolButton $w={9}><Arrow /></ToolButton>
                                <ToolButton $w={22}><Underbar $color="#e8101c"><Glyph $color="#3a5793">A</Glyph></Underbar></ToolButton>
                                <ToolButton $w={9}><Arrow /></ToolButton>
                            </ButtonSet>
                        </ToolRow>
                    </ToolRows>
                </GroupBody>
                <GroupLabel $pr={5}><span>Fonte</span><Launcher /></GroupLabel>
            </Group>

            <Group $w={196}>
                <GroupBody>
                    <ToolRows $pl={3}>
                        <ToolRow>
                            <ButtonSet>
                                <ToolButton $w={22}><ListIcon /></ToolButton>
                                <ToolButton $w={8}><Arrow /></ToolButton>
                                <ToolButton $w={24}><ListIcon marks={['1', '2', '3']} /></ToolButton>
                                <ToolButton $w={8}><Arrow /></ToolButton>
                                <ToolButton $w={22}><MultiLevel /></ToolButton>
                                <ToolButton $w={8}><Arrow /></ToolButton>
                            </ButtonSet>
                            <ButtonSet>
                                <ToolButton $w={22}><IndentIcon /></ToolButton>
                                <ToolButton $w={21}><IndentIcon flip /></ToolButton>
                            </ButtonSet>
                            <ButtonSet><ToolButton $w={22}><SortIcon /></ToolButton></ButtonSet>
                            <ButtonSet><ToolButton $w={22}><Glyph $sans $size={13}>¶</Glyph></ToolButton></ButtonSet>
                        </ToolRow>
                        <ToolRow>
                            <ButtonSet>
                                <ToolButton $w={22}><Lines rows={[[0, 14], [0, 9], [0, 14], [0, 9], [0, 14]]} /></ToolButton>
                                <ToolButton $w={22} $on><Lines rows={[[0, 14], [2, 10], [0, 14], [2, 10], [0, 14]]} color="#3e3018" /></ToolButton>
                                <ToolButton $w={22}><Lines rows={[[0, 14], [5, 9], [0, 14], [5, 9], [0, 14]]} /></ToolButton>
                                <ToolButton $w={22}><Lines rows={[[0, 14], [0, 14], [0, 14], [0, 14], [0, 14]]} /></ToolButton>
                            </ButtonSet>
                            <ButtonSet $ml={-1}>
                                <ToolButton $w={29} $on><LineSpacing /><Arrow /></ToolButton>
                            </ButtonSet>
                            <ButtonSet $ml={1}>
                                <ToolButton $w={22}><Bucket /></ToolButton>
                                <ToolButton $w={9}><Arrow /></ToolButton>
                                <ToolButton $w={21} $on><BorderIcon /></ToolButton>
                                <ToolButton $w={10}><Arrow /></ToolButton>
                            </ButtonSet>
                        </ToolRow>
                    </ToolRows>
                </GroupBody>
                <GroupLabel $pr={5}><span>Parágrafo</span><Launcher /></GroupLabel>
            </Group>

            <Group $w={543}>
                <GroupBody>
                    <Gallery>
                        {STYLES.map((s) => (
                            <StyleCard key={s.name}>
                                <Sample $font={s.font} $size={s.size} $weight={s.weight} $color={s.color} $ls={s.ls}>{s.text}</Sample>
                                <StyleName>{s.name}</StyleName>
                            </StyleCard>
                        ))}
                        <GalleryScroll>
                            <ScrollCell $off><Arrow up color="#b4b8bd" /></ScrollCell>
                            <ScrollCell><Arrow /></ScrollCell>
                            <ScrollCell>
                                <svg width="6" height="7"><path d="M0 .5h6" stroke="#66799b" /><path d="M0 3h6L3 6z" fill="#66799b" /></svg>
                            </ScrollCell>
                        </GalleryScroll>
                    </Gallery>
                    <ChangeStyles>
                        <ChangeIcon />
                        <span>Alterar</span>
                        <span>Estilos <Arrow /></span>
                    </ChangeStyles>
                </GroupBody>
                <GroupLabel $pr={7}><span>Estilo</span><Launcher /></GroupLabel>
            </Group>

            <Group $w={89}>
                <GroupBody>
                    <CommandList $pl={5}>
                        <Command $gap={2}><Binoculars />Localizar<Arrow /></Command>
                        <Command $gap={2}><ReplaceIcon />Substituir</Command>
                        <Command $gap={2}><Slot $w={16}><Cursor /></Slot>Selecionar<Arrow /></Command>
                    </CommandList>
                </GroupBody>
                <GroupLabel><span>Edição</span></GroupLabel>
            </Group>
        </Ribbon>
    );
}

function SpacingMenu() {
    return (
        <Menu>
            {['1,0', '1,15', '1,5', '2,0', '2,5', '3,0'].map((value) => (
                <MenuItem key={value}>
                    <MenuIcon>
                        {value === '2,0' && (
                            <CheckBox>
                                <svg width="10" height="11" viewBox="0 0 10 11">
                                    <path d="M1 5.500l2.500 4Q5 4 9 .5" fill="none" stroke="#26356e" strokeWidth="1.500" />
                                </svg>
                            </CheckBox>
                        )}
                    </MenuIcon>
                    {value}
                </MenuItem>
            ))}
            <MenuItem><MenuIcon />Opções de Espaçamento de Linha...</MenuItem>
            <MenuLine />
            <MenuItem><MenuIcon><SpaceIcon /></MenuIcon><span><u>R</u>emover Espaço Antes de Parágrafo</span></MenuItem>
            <MenuItem $hover><MenuIcon><SpaceIcon after /></MenuIcon><span><u>A</u>dicionar Espaço Depois de Parágrafo</span></MenuItem>
        </Menu>
    );
}

function Document() {
    return (
        <Page>
            <PageFrame>
                <Heading><span>ESPAÇAMENTO ENTRE LINHAS</span></Heading>
                <Table $h={89} $mt={22}>
                    <MoveHandle>
                        <svg width="10" height="10" viewBox="0 0 10 10">
                            <path d="M5 .5v9M.5 5h9M3.500 2L5 .5 6.500 2M3.500 8L5 9.500 6.500 8M2 3.500L.5 5 2 6.500M8 3.500L9.500 5 8 6.500" fill="none" stroke="#2c5cae" />
                        </svg>
                    </MoveHandle>
                    <Cell $w={186} $lh={44}>
                        <FirstLine>ESPAÇAMENTO ENTRE</FirstLine>
                        <span>LINHAS -&gt; 1,0</span>
                    </Cell>
                    <Cell $w={195} $lh={44}>
                        <FirstLine>ESPAÇAMENTO ENTRE</FirstLine>
                        <span>LINHAS -&gt; 2,0</span>
                    </Cell>
                    <ResizeHandle />
                </Table>
                <Table $h={216} $mt={45}>
                    <Cell $w={186} $left>
                        <Selected $w={170} $h={56} $ml={10} $pt={13}>ESPAÇAMENTO ENTRE</Selected>
                        <Selected $w={111} $h={44} $ml={43} $pt={1}>LINHAS -&gt; 2,0</Selected>
                        <Selected $w={107} $h={57} $ml={45} $pt={14}>ANTES – 0 PT</Selected>
                        <Selected $w={102} $h={57} $ml={42} $pt={14}>DEPOIS – 0 PT</Selected>
                    </Cell>
                    <Cell $w={195}>
                        <span>ESPAÇAMENTO ENTRE</span>
                        <span>LINHAS -&gt; 2,0</span>
                        <span>ANTES – 12 PT</span>
                        <span>DEPOIS – 12 PT</span>
                    </Cell>
                </Table>
            </PageFrame>
        </Page>
    );
}

function StatusRow() {
    return (
        <StatusBar>
            <StatusItem $w={90}>Página: 6 de 18</StatusItem>
            <StatusItem $w={101} $ls={-0.1}>Palavras: 11/2.840</StatusItem>
            <StatusItem $w={32}>
                <svg width="17" height="15" viewBox="0 0 17 15">
                    <path d="M1 9l6-3 7 3-6 4z" fill="#f4f7fc" stroke="#4a6aa6" />
                    <path d="M1 9v2l7 3.500 6-4V9" fill="#9db8e0" stroke="#4a6aa6" />
                    <path d="M7 1l8 8M15 .5L8 9" stroke="#dc4a34" strokeWidth="2" />
                </svg>
            </StatusItem>
            <StatusTools>
                <ViewSet>
                    <ViewButton $on><svg width="11" height="11"><path d="M.5.5h10v10H.5z" fill="#fffbe6" stroke="#7b6a3c" /><path d="M2.500 3h6M2.500 5.500h6M2.500 8h6" stroke="#7b6a3c" /></svg></ViewButton>
                    <ViewButton><svg width="12" height="11"><path d="M.5 1.500l5 1.500 5-1.500v7L5.500 10l-5-1.500zM5.500 3v7" fill="#f6f8fb" stroke="#67758c" /></svg></ViewButton>
                    <ViewButton><svg width="12" height="11"><path d="M.5.5h10v8H.5z" fill="#f6f8fb" stroke="#67758c" /><circle cx="8.500" cy="7.500" r="3" fill="#4e9a5e" /></svg></ViewButton>
                    <ViewButton><Lines w={10} rows={[[0, 7], [3, 6], [3, 6], [0, 7]]} color="#8391a8" /></ViewButton>
                    <ViewButton><Lines w={10} rows={[[0, 10], [0, 10], [0, 10], [0, 10]]} color="#6f7c92" /></ViewButton>
                </ViewSet>
                <Slot $w={37}>90%</Slot>
                <RoundButton><svg width="8" height="8"><path d="M0 4h8" stroke="#44597e" strokeWidth="2" /></svg></RoundButton>
                <SliderLine>
                    <svg width="12" height="12" viewBox="0 0 12 12">
                        <path d="M1 .5h8v7l-4 4-4-4z" fill="#e6edf6" stroke="#5d7297" />
                        <path d="M5 3v4" stroke="#8fa3c2" /><path d="M11.500 2v7" stroke="#5d7297" />
                    </svg>
                </SliderLine>
                <RoundButton><svg width="8" height="8"><path d="M0 4h8M4 0v8" stroke="#44597e" strokeWidth="2" /></svg></RoundButton>
            </StatusTools>
        </StatusBar>
    );
}

function TaskbarRow() {
    return (
        <Taskbar>
            <StartButton>
                <svg width="17" height="16" viewBox="0 0 17 16">
                    <path d="M0 2.300l7-1v6.200H0zM8 1.100L17 0v7.500H8zM0 8.500h7v6.200l-7-1zM8 8.500h9V16l-9-1.200z" fill="#f4f4f4" />
                </svg>
            </StartButton>
            <SearchBox>
                <svg width="21" height="21"><circle cx="10.500" cy="10" r="8.500" fill="none" stroke="#1a1a1a" strokeWidth="2.400" /></svg>
                <span>Digite aqui para pesquisar</span>
                <svg width="12" height="17" viewBox="0 0 12 17" fill="none" stroke="#555" strokeWidth="1.200">
                    <rect x="3.500" y=".6" width="5" height="10" rx="2" />
                    <path d="M1 8v2.500Q1 13 4 13h4q3 0 3-2.500V8M6 13v3.500M3 16.300h6" />
                </svg>
            </SearchBox>
            {TASKS.map((t) => (
                <TaskItem key={t.icon} $w={t.w} $open={t.open} $active={t.active}>{taskIcons[t.icon]}</TaskItem>
            ))}
            <Tray>
                <Slot $w={20}><svg width="12" height="8"><path d="M1 7l5-5 5 5" fill="none" stroke="#e8e8e8" strokeWidth="1.300" /></svg></Slot>
                <Slot $w={25}>
                    <svg width="17" height="12" viewBox="0 0 17 12">
                        <path d="M5.500 4h10v6.500h-10z" fill="#e8e8e8" /><path d="M16 6h1v3h-1z" fill="#e8e8e8" />
                        <path d="M1 1v3h4V1M3 4v5h3M2 0v2M4 0v2" fill="none" stroke="#e8e8e8" />
                    </svg>
                </Slot>
                <Slot $w={22}>
                    <svg width="13" height="13" viewBox="0 0 13 13" fill="none" stroke="#cfcfcf">
                        <path d="M1 12Q1.500 2 12.500 1.500M4 12Q4.500 5 12.500 4.500M7 12Q7.500 8 12.500 7.500" strokeWidth="1.300" />
                        <circle cx="11" cy="11" r="1.500" fill="#fff" stroke="none" />
                    </svg>
                </Slot>
                <Slot $w={20}>
                    <svg width="16" height="13" viewBox="0 0 16 13" fill="none" stroke="#dedede" strokeWidth="1.100">
                        <path d="M1 4.500h2.500L7 1v11L3.500 8.500H1zM9 4.500q1.500 2 0 4" />
                        <path d="M11 2.500q3 4 0 8M13.500 1q3.500 5.500 0 11" stroke="#777" />
                    </svg>
                </Slot>
                <Slot $w={2} />
                <Clock><span>15:42</span><span>03/06/2018</span></Clock>
                <Slot $w={40}>
                    <svg width="16" height="16" viewBox="0 0 16 16"><path d="M.7 1h14.600v10.500H10.500L8 14.500 5.500 11.500H.7z" fill="none" stroke="#e8e8e8" strokeWidth="1.200" /></svg>
                </Slot>
            </Tray>
        </Taskbar>
    );
}

function App() {
    return (
        <Screen>
            <GlobalStyle />
            <Desktop>
                <Wallpaper>A</Wallpaper>
                <Window>
                    <TitleBar>
                        <QuickAccess>
                            <Slot $w={17}><Save /></Slot>
                            <Slot $w={24}><Undo /></Slot>
                            <Slot $w={7}><Arrow /></Slot>
                            <Slot $w={25}><Redo /></Slot>
                            <Slot $w={17}><Printer /></Slot>
                            <Slot $w={23}><PageIcon /></Slot>
                            <Slot $w={20}><PageIcon lens /></Slot>
                        </QuickAccess>
                        <Slot $w={20}>
                            <svg width="6" height="7"><path d="M0 .5h6" stroke="#4a5568" /><path d="M0 3h6L3 6z" fill="#4a5568" /></svg>
                        </Slot>
                        <Title>Apostila word 8º ano - AULAS PRÁTICA PARTE 1.docx - Microsoft Word</Title>
                        <ContextTitle>Ferramentas de Tabela</ContextTitle>
                        <WindowButtons>
                            <Slot $w={24}><svg width="10" height="10"><path d="M0 5.500h10" stroke="#333" /></svg></Slot>
                            <Slot $w={61}><svg width="10" height="10"><path d="M.5.5h9v9h-9z" fill="none" stroke="#333" /></svg></Slot>
                            <Slot $w={26}><svg width="10" height="10"><path d="M.5.5l9 9M9.500.5l-9 9" stroke="#333" strokeWidth="1.100" /></svg></Slot>
                        </WindowButtons>
                    </TitleBar>
                    <TabStrip>
                        <Tab $w={48} $active>Início</Tab>
                        <Tab $w={62}>Inserir</Tab>
                        <Tab $w={105}>Layout da Página</Tab>
                        <Tab $w={86}>Referências</Tab>
                        <Tab $w={111}>Correspondências</Tab>
                        <Tab $w={67}>Revisão</Tab>
                        <Tab $w={65}>Exibição</Tab>
                        <Tab $w={68}>Acrobat</Tab>
                        <ContextTabs>
                            <Tab $w={59}>Design</Tab>
                            <Tab $w={60}>Layout</Tab>
                        </ContextTabs>
                        <Help>
                            <svg width="13" height="13">
                                <circle cx="6.500" cy="6.500" r="6" fill="#e5effc" stroke="#3f6fc4" />
                                <circle cx="6.500" cy="6.500" r="4.300" fill="#3b6bcb" />
                                <path d="M4.800 5.500q0-2 1.700-2 2 0 1.700 1.700L6.500 7v1" stroke="#fff" fill="none" />
                            </svg>
                        </Help>
                    </TabStrip>
                    <RibbonBar />
                    <RulerBar>
                        <TabSelector>
                            <div><svg width="6" height="6"><path d="M1 0v5h5" fill="none" stroke="#222c44" strokeWidth="2" /></svg></div>
                        </TabSelector>
                        <HorizontalRuler>{ticks(-18, 65, [-1, 47])}</HorizontalRuler>
                        <RulerToggle />
                    </RulerBar>
                    <Workspace>
                        <VerticalRuler>{ticks(1, 62)}</VerticalRuler>
                        <Canvas>
                            <svg width="287" height="509" viewBox="0 0 287 509">
                                <path d="M0 0h287Q130 34 0 108z" fill="#a9c5e8" fillOpacity=".75" />
                                <path d="M0 0h287Q125 29 0 88z" fill="#b4caec" fillOpacity=".8" />
                            </svg>
                            <Document />
                        </Canvas>
                        <ScrollColumn>
                            <ScrollTrack>
                                <Arrow up color="#3f567f" />
                                <ScrollThumb />
                                <Arrow color="#3f567f" />
                            </ScrollTrack>
                            <svg width="5" height="46" viewBox="0 0 5 46">
                                <path d="M5 7L2 10h3M5 11L2 14h3M5 35H2l3 3M5 39H2l3 3" fill="none" stroke="#1d2740" strokeWidth="1.500" />
                                <circle cx="5" cy="23" r="3.500" fill="none" stroke="#1d2740" />
                            </svg>
                        </ScrollColumn>
                    </Workspace>
                    <StatusRow />
                </Window>
            </Desktop>
            <TaskbarRow />

            <OfficeButton><OfficeLogo /></OfficeButton>
            <IndentMarker>
                <svg width="12" height="20" viewBox="0 0 12 20">
                    <path d="M2 .5h8v3L6 8 2 3.500zM2 14.500v-3L6 8l4 3.500v3zM2 15.500h8v4H2z" fill="#e6eefb" stroke="#5f7fb8" />
                </svg>
            </IndentMarker>
            <SpacingMenu />
            <Spotlight />
            <Pointer><Cursor w={11} h={19} fill="#f4ee7a" stroke="#77733a" /></Pointer>
        </Screen>
    );
}

export default App;
